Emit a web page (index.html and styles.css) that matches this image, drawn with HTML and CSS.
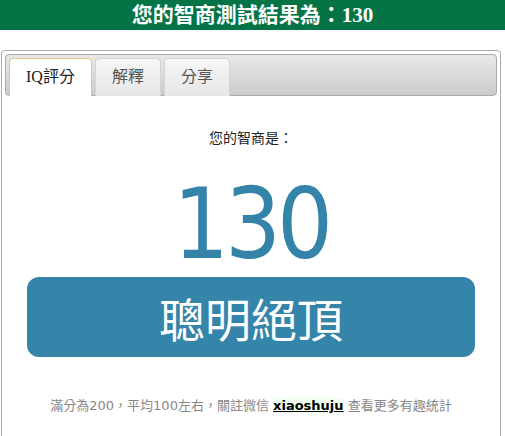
FILE: index.html
```html
<!DOCTYPE html>
<html>
	<head>
		<title>IQ測試結果</title>
		<meta name="viewport" content="width=device-width, initial-scale=1" />
		<link rel="stylesheet" href="styles.css">
	</head>
	<body>
		<header class="title">您的智商測試結果為：130</header>
		<main class="tabs">
			<nav class="tab-nav">
				<a class="tab active">IQ評分</a>
				<a class="tab">解釋</a>
				<a class="tab">分享</a>
			</nav>
			<section class="panel">
				<p class="prompt">您的智商是：</p>
				<div class="score">130</div>
				<div class="verdict">聰明絕頂</div>
				<p class="note">滿分為200，平均100左右，關註微信 <a class="wechat">xiaoshuju</a> 查看更多有趣統計</p>
			</section>
		</main>
	</body>
</html>
```
FILE: styles.css
```css
body {
	margin: 0;
	font-family: "Liberation Serif", "Noto Sans CJK TC", serif;
	background: #fff;
}
.title {
	background: #047447;
	color: #fff;
	font-weight: bold;
	font-size: 21px;
	height: 30px;
	line-height: 30px;
	text-align: center;
}
.tabs {
	box-sizing: border-box;
	width: 500px;
	margin: 20px 0 0 1px;
	padding: 3px;
	border: 1px solid #aaa;
	border-radius: 4px;
}
.tab-nav {
	display: flex;
	gap: 3px;
	padding: 3px 3px 0;
	border: 1px solid #aaa;
	border-radius: 4px;
	background: linear-gradient(#e9e9e9, #cbcbcb);
}
.tab {
	padding: 8px 16px 9px;
	margin-bottom: -1px;
	line-height: 20px;
	font-size: 16px;
	color: #555;
	border: 1px solid #d3d3d3;
	border-bottom: 0;
	border-radius: 4px 4px 0 0;
	background: linear-gradient(#f6f6f6, #e6e6e6);
}
.tab.active {
	color: #212121;
	background: #fff;
	border-color: #e2c68c;
}
.panel {
	text-align: center;
	padding-bottom: 20px;
}
.prompt {
	margin: 31px 0 0;
	font-family: "Noto Sans CJK TC", sans-serif;
	font-size: 14px;
	line-height: 20px;
	color: #222;
}
.score {
	margin-top: 28px;
	font-family: "DejaVu Sans Condensed", "DejaVu Sans", sans-serif;
	font-size: 98px;
	line-height: 98px;
	letter-spacing: -4px;
	color: #3483a9;
}
.verdict {
	width: 448px;
	height: 80px;
	margin: 4px auto 0;
	border-radius: 12px;
	background: #3584aa;
	color: #fff;
	font-family: "Noto Sans CJK TC", serif;
	font-size: 46px;
	line-height: 80px;
}
.note {
	margin: 39px 0 0;
	font-family: "DejaVu Sans", "Noto Sans CJK TC", sans-serif;
	font-size: 13px;
	line-height: 20px;
	color: #888;
}
.wechat {
	color: #000;
	font-weight: bold;
	text-decoration: underline;
	background: #effeef;
}
```
